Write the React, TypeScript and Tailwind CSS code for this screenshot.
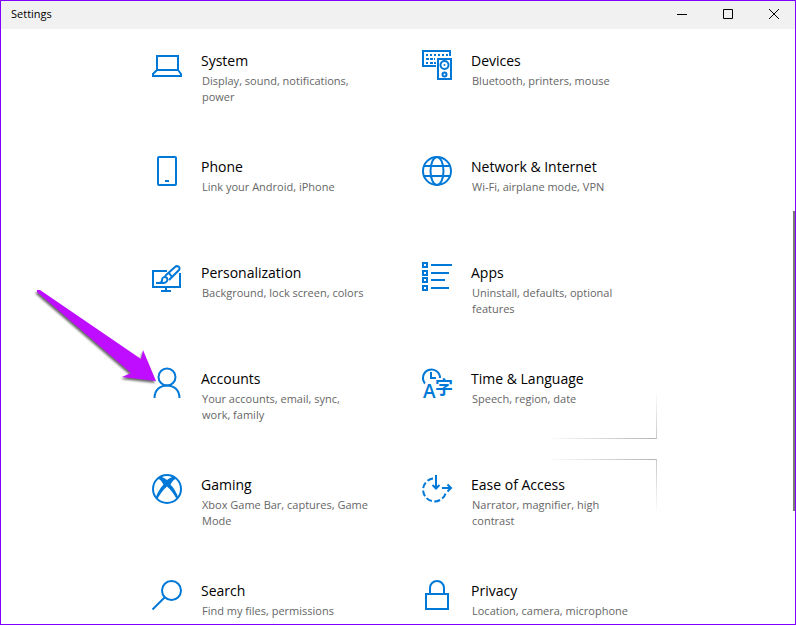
import type { ReactNode } from 'react';

type Category = {
  title: string;
  description: string;
  icon: ReactNode;
  hovered?: 'above' | 'below';
};

const categories: Category[] = [
  {
    title: 'System',
    description: 'Display, sound, notifications, power',
    icon: (
      <>
        <path d="M5 6h21v14H5z" />
        <path d="M5 20 1 24v2h28v-2l-3-4" />
      </>
    ),
  },
  {
    title: 'Devices',
    description: 'Bluetooth, printers, mouse',
    icon: (
      <>
        <path d="M14 16H1V1h27v5" />
        <path d="M4 5h22" strokeDasharray="2 2" />
        <path d="M4 9h9M4 13h2M8 13h6" strokeDasharray="3 1" />
        <path d="M16 9h13v20H16z" />
        <circle cx="22.500" cy="15" r="4" />
        <circle cx="22.500" cy="15" r="1" fill="currentColor" stroke="none" />
        <circle cx="22.500" cy="24.500" r="2" />
      </>
    ),
  },
  {
    title: 'Phone',
    description: 'Link your Android, iPhone',
    icon: (
      <>
        <rect x="6" y="1" width="18" height="28" rx="1" />
        <path d="M13 25h4" />
      </>
    ),
  },
  {
    title: 'Network & Internet',
    description: 'Wi-Fi, airplane mode, VPN',
    icon: (
      <>
        <circle cx="15" cy="15" r="14" />
        <ellipse cx="15" cy="15" rx="6.500" ry="14" />
        <path d="M2 10h26M2 20h26" />
      </>
    ),
  },
  {
    title: 'Personalization',
    description: 'Background, lock screen, colors',
    icon: (
      <>
        <path d="M15 9H1v16h27V11M14 25v4M9 29h10" />
        <path d="M4 21h7c4 0 5-3 4-5-2-2-5-1-5 2 0 2-1 3-3 3" />
        <path d="m13 14 10-9c2-2 6 0 4 3l-10 10M17 11l3 4" />
      </>
    ),
  },
  {
    title: 'Apps',
    description: 'Uninstall, defaults, optional features',
    icon: (
      <>
        <path d="M1 1h4v4H1zM1 9h4v4H1zM1 16h4v4H1zM1 24h4v4H1z" />
        <path d="M9 3h21M9 11h18M9 18h14M9 26h18" />
      </>
    ),
  },
  {
    title: 'Accounts',
    description: 'Your accounts, email, sync, work, family',
    icon: (
      <>
        <circle cx="15" cy="9" r="8.500" />
        <path d="M2.500 30C2.500 22 8 17.500 15 17.500S27.500 22 27.500 30" />
      </>
    ),
  },
  {
    title: 'Time & Language',
    description: 'Speech, region, date',
    hovered: 'above',
    icon: (
      <>
        <path d="M3 15.500A8.500 8.500 0 1 1 18 10" />
        <path d="M9 4v6h5" />
        <text
          x="1"
          y="30"
          fill="currentColor"
          stroke="none"
          className="font-['Open_Sans',sans-serif] text-[19px] font-semibold"
        >
          A
        </text>
        <text
          x="13"
          y="26"
          fill="currentColor"
          stroke="none"
          className="font-['Noto_Sans_CJK_SC',sans-serif] text-[18px] font-bold"
        >
          字
        </text>
      </>
    ),
  },
  {
    title: 'Gaming',
    description: 'Xbox Game Bar, captures, Game Mode',
    icon: (
      <>
        <circle cx="15" cy="15" r="14" />
        <path
          d="M7.500 2.500C10 2.500 13 4.500 15 6c2-1.500 5-3.500 7.500-3.500L23.500 5C21.500 5.500 20 8 18.500 10.500c4 4.500 6.500 9 7.500 12.500L24.500 25c-2-4.500-5.500-9-9.500-12.500-4 3.500-7.500 8-9.500 12.500L4 23C5 19.500 7.500 15 11.500 10.500 10 8 8.500 5.500 6.500 5z"
          fill="currentColor"
          stroke="none"
        />
      </>
    ),
  },
  {
    title: 'Ease of Access',
    description: 'Narrator, magnifier, high contrast',
    hovered: 'below',
    icon: (
      <>
        <path d="M11 4.500A11.500 11.500 0 1 0 24 17.500" strokeDasharray="6 2.500" />
        <path d="M14 1v13M10.500 11 14 14.500 17.500 11" />
        <path d="M20 14h9M25.500 10.500 29 14l-3.500 3.500" />
      </>
    ),
  },
  {
    title: 'Search',
    description: 'Find my files, permissions',
    icon: (
      <>
        <circle cx="19.500" cy="10.500" r="9.500" />
        <path d="M12.500 17.500.500 29.500" />
      </>
    ),
  },
  {
    title: 'Privacy',
    description: 'Location, camera, microphone',
    icon: (
      <>
        <path d="M4 14h22v15H4z" />
        <path d="M8 14V8a7 7 0 0 1 14 0v6" />
      </>
    ),
  },
];

// Soft highlight on the tile edges closest to the pointer
function Reveal({ side }: { side: 'above' | 'below' }) {
  if (side === 'above') {
    return (
      <>
        <span className="absolute right-0 bottom-0 h-px w-28 bg-linear-to-l from-[#b4b4b4] to-transparent" />
        <span className="absolute right-0 bottom-0 h-12 w-px bg-linear-to-t from-[#c8c8c8] to-transparent" />
      </>
    );
  }
  return (
    <>
      <span className="absolute top-0 right-0 h-px w-28 bg-linear-to-l from-[#b4b4b4] to-transparent" />
      <span className="absolute top-0 right-0 h-14 w-px bg-linear-to-b from-[#c8c8c8] to-transparent" />
    </>
  );
}

function CategoryTile({ category }: { category: Category }) {
  return (
    <a href="#" className="relative flex h-[86px] gap-[19px] py-[15px] pr-[18px] pl-[15px]">
      <svg
        viewBox="0 0 30 30"
        className="size-[30px] shrink-0 overflow-visible text-[#0078d7]"
        fill="none"
        stroke="currentColor"
        strokeWidth="2"
        aria-hidden="true"
      >
        {category.icon}
      </svg>
      <div className="min-w-0 pt-px">
        <div className="text-[14px] leading-5 text-black">{category.title}</div>
        <div className="mt-0.5 pl-px text-[11px] leading-4 text-[#666]">
          {category.description}
        </div>
      </div>
      {category.hovered && <Reveal side={category.hovered} />}
    </a>
  );
}

function TitleBar() {
  return (
    <header className="flex h-7 shrink-0 items-center justify-between bg-[#f1f1f1] pb-0.5 pl-2.5">
      <h1 className="text-[11px] leading-4 text-black">Settings</h1>
      <div className="-mr-0.5 flex text-black">
        <button type="button" aria-label="Minimize" className="flex h-6 w-[46px] items-center justify-center">
          <svg viewBox="0 0 12 12" className="size-3" stroke="currentColor" fill="none">
            <path d="M1 6.500h10" />
          </svg>
        </button>
        <button type="button" aria-label="Maximize" className="flex h-6 w-[46px] items-center justify-center">
          <svg viewBox="0 0 12 12" className="size-3" stroke="currentColor" fill="none">
            <path d="M1.500 1.500h9v9h-9z" />
          </svg>
        </button>
        <button type="button" aria-label="Close" className="flex h-6 w-[46px] items-center justify-center">
          <svg viewBox="0 0 12 12" className="size-3" stroke="currentColor" fill="none">
            <path d="m1 1 10 10M11 1 1 11" />
          </svg>
        </button>
      </div>
    </header>
  );
}

export default function App() {
  return (
    <div className="relative flex h-screen flex-col overflow-hidden border border-[#8000ff] bg-white font-['Open_Sans',sans-serif]">
      <TitleBar />
      <main className="min-h-0 flex-1 overflow-hidden pt-1.5 pr-0.5">
        <nav
          aria-label="Settings categories"
          className="mx-auto grid max-w-[520px] grid-cols-2 gap-5"
        >
          {categories.map((c) => (
            <CategoryTile key={c.title} category={c} />
          ))}
        </nav>
      </main>
      <div className="absolute top-[210px] right-0 h-[300px] w-0.5 bg-[#7a7a7a]" />
      <svg
        viewBox="0 0 130 100"
        className="absolute top-[284px] left-[31px] h-[100px] w-[130px] overflow-visible drop-shadow-[-1px_2px_1px_rgba(0,0,0,0.6)]"
        fill="#bf0dff"
        aria-hidden="true"
      >
        <path d="M5 5 8 5 109 74 111 65 124 96 90 92 99 88 5 7z" />
      </svg>
    </div>
  );
}
